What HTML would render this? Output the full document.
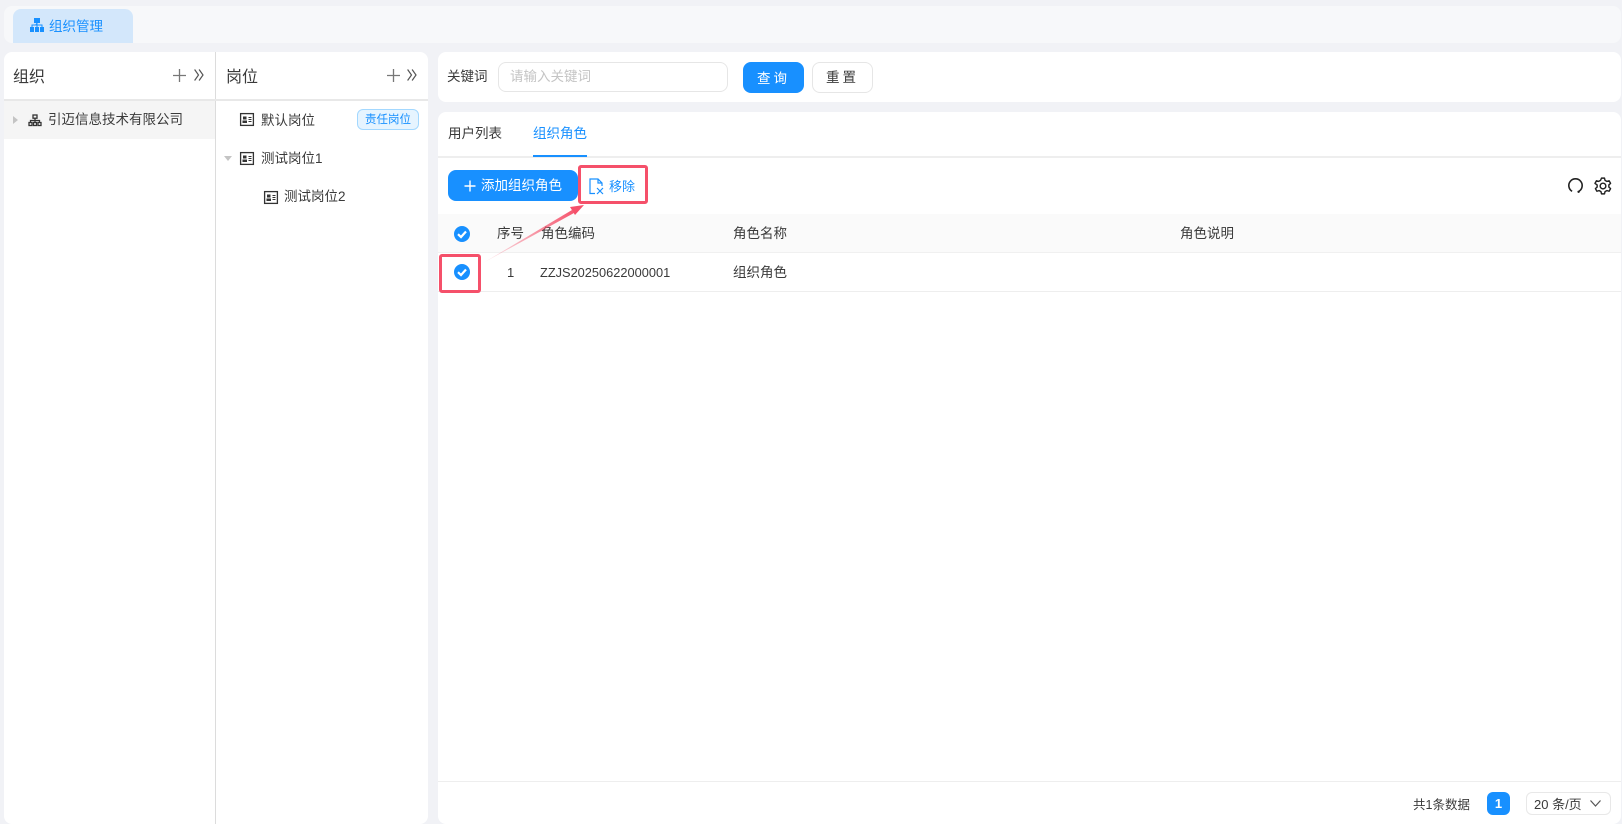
<!DOCTYPE html>
<html><head><meta charset="utf-8"><style>
html,body{margin:0;padding:0;width:1622px;height:824px;overflow:hidden;background:#f1f2f6}
body{position:relative;font-family:"Liberation Sans","Noto Sans CJK SC",sans-serif;font-size:13px;color:#3a3a3a}
#w{position:absolute;left:0;top:0;width:1622px;height:824px;filter:blur(.35px)}
.a{position:absolute}
.t{position:absolute;white-space:nowrap;line-height:20px;height:20px}
svg{position:absolute;overflow:visible}
.cb{position:absolute;width:16px;height:16px;border-radius:50%;background:#1890ff}
.red{position:absolute;box-sizing:border-box;border:3px solid #f5506a;border-radius:3px}
</style></head><body><div id="w">
<div class="a" style="left:4px;top:6px;width:1617px;height:37px;background:#f7f8fa;border-radius:8px"></div>
<div class="a" style="left:13px;top:9px;width:120px;height:34px;background:#d3e7fb;border-radius:8px 8px 0 0"></div>
<svg style="left:30px;top:18px" width="14" height="14" viewBox="0 0 14 14" fill="#1890ff"><rect x="4" y="0" width="6" height="5"/><rect x="0" y="9" width="4" height="5"/><rect x="5" y="9" width="4" height="5"/><rect x="10" y="9" width="4" height="5"/><path d="M6.500 5h1v1.500H12.500V9h-1V7.500h-4V9h-1V7.500h-4V9h-1V6.500h4z"/></svg>
<div class="t" style="left:49px;top:17px;color:#1890ff;font-size:13.500px">组织管理</div>

<div class="a" style="left:4px;top:52px;width:424px;height:772px;background:#fff;border-radius:8px"></div>
<div class="a" style="left:215px;top:52px;width:1px;height:772px;background:#dcdcdc"></div>
<div class="a" style="left:4px;top:99px;width:424px;height:2px;background:#e8e8e8"></div>
<div class="t" style="left:13px;top:68px;font-size:16px">组织</div>
<div class="t" style="left:226px;top:68px;font-size:16px">岗位</div>
<svg style="left:173px;top:69px" width="13" height="13" viewBox="0 0 13 13" stroke="#777" stroke-width="1.300" fill="none"><path d="M6.500 0v13M0 6.500h13"/></svg>
<svg style="left:194px;top:69px" width="10" height="12" viewBox="0 0 10 12" stroke="#555" stroke-width="1.200" fill="none"><path d="M.6 .5 4.500 6 .6 11.500M5.100 .5 9 6 5.100 11.500"/></svg>
<svg style="left:387px;top:69px" width="13" height="13" viewBox="0 0 13 13" stroke="#777" stroke-width="1.300" fill="none"><path d="M6.500 0v13M0 6.500h13"/></svg>
<svg style="left:407px;top:69px" width="10" height="12" viewBox="0 0 10 12" stroke="#555" stroke-width="1.200" fill="none"><path d="M.6 .5 4.500 6 .6 11.500M5.100 .5 9 6 5.100 11.500"/></svg>

<div class="a" style="left:4px;top:101px;width:211px;height:38px;background:#f5f5f5"></div>
<svg style="left:13px;top:116px" width="5" height="8" viewBox="0 0 5 8" fill="#c4c4c4"><path d="M0 0 5 4 0 8z"/></svg>
<svg style="left:28px;top:114px" width="14" height="13" viewBox="0 0 14 13" fill="none" stroke="#333" stroke-width="1.300"><rect x="5" y="1" width="4" height="3.200"/><rect x="1" y="8.500" width="3" height="3"/><rect x="5.500" y="8.500" width="3" height="3"/><rect x="10" y="8.500" width="3" height="3"/><path d="M7 4.200V8.500M2.500 8.500V6.500H11.500V8.500"/></svg>
<div class="t" style="left:48px;top:110px;font-size:13.500px">引迈信息技术有限公司</div>

<svg style="left:240px;top:113px" width="14" height="13" viewBox="0 0 14 13"><rect x=".6" y=".6" width="12.800" height="11.800" fill="none" stroke="#333" stroke-width="1.300"/><rect x="3" y="3.500" width="3.500" height="3" fill="#333"/><rect x="2.500" y="7.500" width="4.500" height="2.500" fill="#333"/><path d="M8.500 4.500h3M8.500 6.500h3M8.500 8.500h3" stroke="#333"/></svg>
<div class="t" style="left:261px;top:111px;font-size:13.500px">默认岗位</div>
<div class="a" style="left:357px;top:109px;width:62px;height:21px;box-sizing:border-box;background:#e6f4ff;border:1px solid #a3d8ff;border-radius:6px;color:#1890ff;font-size:11.500px;line-height:21px;text-align:center">责任岗位</div>

<svg style="left:224px;top:156px" width="8" height="5" viewBox="0 0 8 5" fill="#c4c4c4"><path d="M0 0h8L4 5z"/></svg>
<svg style="left:240px;top:152px" width="14" height="13" viewBox="0 0 14 13"><rect x=".6" y=".6" width="12.800" height="11.800" fill="none" stroke="#333" stroke-width="1.300"/><rect x="3" y="3.500" width="3.500" height="3" fill="#333"/><rect x="2.500" y="7.500" width="4.500" height="2.500" fill="#333"/><path d="M8.500 4.500h3M8.500 6.500h3M8.500 8.500h3" stroke="#333"/></svg>
<div class="t" style="left:261px;top:149px;font-size:13.500px">测试岗位1</div>
<svg style="left:264px;top:191px" width="14" height="13" viewBox="0 0 14 13"><rect x=".6" y=".6" width="12.800" height="11.800" fill="none" stroke="#333" stroke-width="1.300"/><rect x="3" y="3.500" width="3.500" height="3" fill="#333"/><rect x="2.500" y="7.500" width="4.500" height="2.500" fill="#333"/><path d="M8.500 4.500h3M8.500 6.500h3M8.500 8.500h3" stroke="#333"/></svg>
<div class="t" style="left:284px;top:187px;font-size:13.500px">测试岗位2</div>

<div class="a" style="left:438px;top:52px;width:1183px;height:50px;background:#fff;border-radius:8px"></div>
<div class="t" style="left:447px;top:67px;font-size:13.500px">关键词</div>
<div class="a" style="left:498px;top:62px;width:230px;height:30px;box-sizing:border-box;border:1px solid #e6e6e6;border-radius:8px"></div>
<div class="t" style="left:510px;top:67px;font-size:13.500px;color:#c4c4c4">请输入关键词</div>
<div class="a" style="left:743px;top:62px;width:61px;height:31px;background:#1890ff;border-radius:8px;color:#fff;font-size:13.500px;line-height:33px;text-align:center;letter-spacing:3px">查询</div>
<div class="a" style="left:812px;top:62px;width:61px;height:31px;box-sizing:border-box;border:1px solid #e6e6e6;border-radius:8px;font-size:13.500px;line-height:29px;text-align:center;letter-spacing:3px">重置</div>

<div class="a" style="left:438px;top:112px;width:1183px;height:712px;background:#fff;border-radius:8px"></div>
<div class="t" style="left:448px;top:124px;font-size:13.500px">用户列表</div>
<div class="t" style="left:533px;top:124px;font-size:13.500px;color:#1890ff">组织角色</div>
<div class="a" style="left:438px;top:156px;width:1183px;height:2px;background:#eee"></div>
<div class="a" style="left:533px;top:155px;width:54px;height:2px;background:#1890ff"></div>

<div class="a" style="left:448px;top:170px;width:130px;height:31px;background:#1890ff;border-radius:8px"></div>
<svg style="left:464px;top:180px" width="12" height="12" viewBox="0 0 12 12" stroke="#fff" stroke-width="1.400" fill="none"><path d="M6 .5v11M.5 6h11"/></svg>
<div class="t" style="left:481px;top:176px;font-size:13.500px;color:#fff">添加组织角色</div>
<svg style="left:589px;top:178px" width="16" height="17" viewBox="0 0 16 17" fill="none" stroke="#1890ff" stroke-width="1.200"><path d="M6 15.500H1V1h8l4 4v3M9 1v4h4M8 10l6 6M14 10l-6 6"/></svg>
<div class="t" style="left:609px;top:177px;font-size:13px;color:#1890ff">移除</div>
<svg style="left:1568px;top:178px" width="15" height="15" viewBox="0 0 15 15" fill="none" stroke="#222" stroke-width="1.600"><path d="M4.100 13.300A6.700 6.700 0 1 1 10.900 13.300"/><circle cx="10.600" cy="13.800" r="1.200" fill="#222" stroke="none"/></svg>
<svg style="left:1594px;top:177px" width="18" height="18" viewBox="0 0 24 24" fill="none" stroke="#222" stroke-width="1.900" stroke-linejoin="round"><circle cx="12" cy="12" r="3.800"/><path d="M10 1.500h4l.7 3 2.400 1.400 3-.9 2 3.500-2.300 2.100v2.800l2.300 2.100-2 3.500-3-.9-2.400 1.400-.7 3h-4l-.7-3-2.400-1.400-3 .9-2-3.500 2.300-2.100v-2.800L1.300 8.500l2-3.500 3 .9 2.400-1.400z"/></svg>

<div class="a" style="left:438px;top:214px;width:1183px;height:38px;background:#fafafa"></div>
<div class="a" style="left:438px;top:252px;width:1183px;height:1px;background:#f0f0f0"></div>
<div class="a" style="left:438px;top:291px;width:1183px;height:1px;background:#eee"></div>
<div class="cb" style="left:454px;top:226px"></div>
<svg style="left:454px;top:226px" width="16" height="16" viewBox="0 0 16 16" fill="none" stroke="#fff" stroke-width="2.200"><path d="M4 8.200 7 11l5-5.500"/></svg>
<div class="cb" style="left:454px;top:264px"></div>
<svg style="left:454px;top:264px" width="16" height="16" viewBox="0 0 16 16" fill="none" stroke="#fff" stroke-width="2.200"><path d="M4 8.200 7 11l5-5.500"/></svg>
<div class="t" style="left:497px;top:224px;font-size:13.500px">序号</div>
<div class="t" style="left:541px;top:224px;font-size:13.500px">角色编码</div>
<div class="t" style="left:733px;top:224px;font-size:13.500px">角色名称</div>
<div class="t" style="left:1180px;top:224px;font-size:13.500px">角色说明</div>
<div class="t" style="left:507px;top:263px;font-size:13px">1</div>
<div class="t" style="left:540px;top:263px;font-size:12.800px">ZZJS20250622000001</div>
<div class="t" style="left:733px;top:263px;font-size:13.500px">组织角色</div>

<svg style="left:0;top:0" width="1622" height="824"><defs><linearGradient id="g" gradientUnits="userSpaceOnUse" x1="483" y1="263" x2="578" y2="208"><stop offset="0" stop-color="#f5506a" stop-opacity=".1"/><stop offset="1" stop-color="#f5506a"/></linearGradient></defs><path d="M483 263 572 210 574 213z" fill="url(#g)"/><path d="M584 205 570 207 575 215z" fill="#f5506a"/></svg>
<div class="red" style="left:578px;top:165px;width:70px;height:39px"></div>
<div class="red" style="left:439px;top:254px;width:42px;height:39px"></div>

<div class="a" style="left:438px;top:781px;width:1183px;height:1px;background:#eee"></div>
<div class="t" style="left:1413px;top:795px;font-size:12.500px">共1条数据</div>
<div class="a" style="left:1487px;top:792px;width:23px;height:23px;background:#1890ff;border-radius:6px;color:#fff;font-weight:bold;font-size:13px;line-height:23px;text-align:center">1</div>
<div class="a" style="left:1526px;top:792px;width:85px;height:23px;box-sizing:border-box;border:1px solid #e8e8e8;border-radius:6px"></div>
<div class="t" style="left:1534px;top:795px;font-size:13px">20 条/页</div>
<svg style="left:1590px;top:800px" width="11" height="7" viewBox="0 0 11 7" fill="none" stroke="#555" stroke-width="1.200"><path d="M.5 .5 5.500 6 10.500 .5"/></svg>
</div></body></html>
